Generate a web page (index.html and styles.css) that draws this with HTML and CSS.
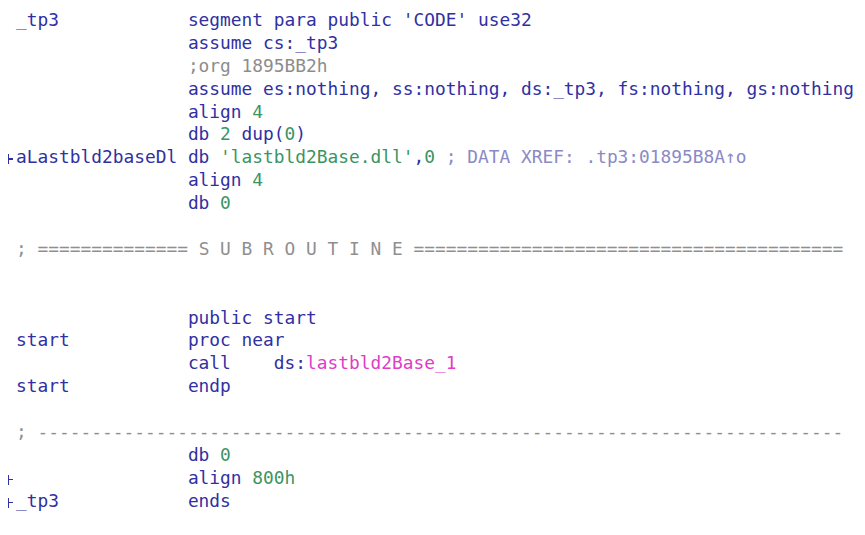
FILE: index.html
```html
<!DOCTYPE html>
<html lang="en">
<head>
<meta charset="utf-8">
<title>IDA listing</title>
<link rel="stylesheet" href="styles.css">
</head>
<body>
<div class="listing">
  <div class="line"><span class="gut"></span><span class="lbl">_tp3</span><span class="ins">segment para public 'CODE' use32</span></div>
  <div class="line"><span class="gut"></span><span class="lbl"></span><span class="ins">assume cs:_tp3</span></div>
  <div class="line"><span class="gut"></span><span class="lbl"></span><span class="ins cmt">;org 1895BB2h</span></div>
  <div class="line"><span class="gut"></span><span class="lbl"></span><span class="ins">assume es:nothing, ss:nothing, ds:_tp3, fs:nothing, gs:nothing</span></div>
  <div class="line"><span class="gut"></span><span class="lbl"></span><span class="ins">align <span class="num">4</span></span></div>
  <div class="line"><span class="gut"></span><span class="lbl"></span><span class="ins">db <span class="num">2</span> dup(<span class="num">0</span>)</span></div>
  <div class="line"><span class="gut"><span class="mark"></span></span><span class="lbl">aLastbld2baseDl</span><span class="ins">db <span class="num">'lastbld2Base.dll'</span>,<span class="num">0</span> <span class="xref">; DATA XREF: .tp3:01895B8A↑o</span></span></div>
  <div class="line"><span class="gut"></span><span class="lbl"></span><span class="ins">align <span class="num">4</span></span></div>
  <div class="line"><span class="gut"></span><span class="lbl"></span><span class="ins">db <span class="num">0</span></span></div>
  <div class="line"></div>
  <div class="line"><span class="gut"></span><span class="sep">; ============== S U B R O U T I N E ========================================</span></div>
  <div class="line"></div>
  <div class="line"></div>
  <div class="line"><span class="gut"></span><span class="lbl"></span><span class="ins">public start</span></div>
  <div class="line"><span class="gut"></span><span class="lbl">start</span><span class="ins">proc near</span></div>
  <div class="line"><span class="gut"></span><span class="lbl"></span><span class="ins">call    ds:<span class="imp">lastbld2Base_1</span></span></div>
  <div class="line"><span class="gut"></span><span class="lbl">start</span><span class="ins">endp</span></div>
  <div class="line"></div>
  <div class="line"><span class="gut"></span><span class="sep">; ---------------------------------------------------------------------------</span></div>
  <div class="line"><span class="gut"></span><span class="lbl"></span><span class="ins">db <span class="num">0</span></span></div>
  <div class="line"><span class="gut"><span class="mark"></span></span><span class="lbl"></span><span class="ins">align <span class="num">800h</span></span></div>
  <div class="line"><span class="gut"><span class="mark"></span></span><span class="lbl">_tp3</span><span class="ins">ends</span></div>
</div>
</body>
</html>
```
FILE: styles.css
```css
html, body {
  margin: 0;
  padding: 0;
  background: #ffffff;
}

.listing {
  padding-top: 9px;
  font-family: "DejaVu Sans Mono", "Liberation Mono", monospace;
  font-size: 17.85px;
  line-height: 22.9px;
  color: #3030a2;
}

.line {
  display: flex;
  height: 22.9px;
  white-space: pre;
}

.gut {
  width: 16px;
  flex: 0 0 16px;
  display: flex;
  align-items: center;
  padding-left: 8px;
  box-sizing: border-box;
}

.mark {
  position: relative;
  width: 5px;
  height: 10px;
  margin-top: 3px;
  border-left: 1.5px solid #3030a2;
  box-sizing: border-box;
}

.mark::after {
  content: "";
  position: absolute;
  left: 0;
  top: 4px;
  width: 4px;
  height: 1.5px;
  background: #3030a2;
}

.lbl {
  width: 16ch;
  flex: 0 0 16ch;
}

.ins {
  flex: 1 1 auto;
}

.num {
  color: #3a9462;
}

.cmt {
  color: #8c8c8c;
}

.xref {
  color: #8a8ac4;
}

.imp {
  color: #e03cc6;
}

.sep {
  color: #8f8f8f;
}
```
